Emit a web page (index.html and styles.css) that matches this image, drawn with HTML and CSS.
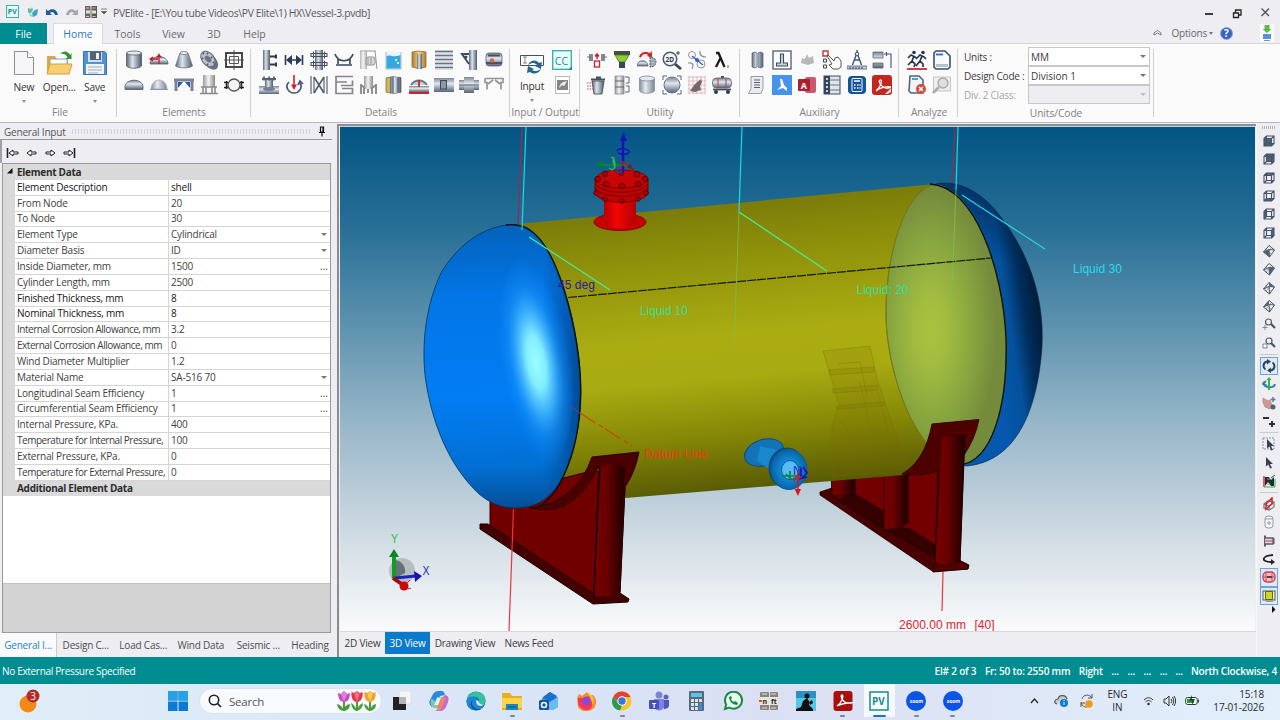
FILE: index.html
```html
<!DOCTYPE html>
<html lang="en">
<head>
<meta charset="utf-8">
<title>PVElite</title>
<link rel="stylesheet" href="styles.css">
</head>
<body>
<svg class="defs" width="0" height="0">
  <defs>
    <linearGradient id="st"><stop offset="0" stop-color="#5c6878"/><stop offset=".4" stop-color="#dde5ec"/><stop offset="1" stop-color="#4d5a6b"/></linearGradient>
    <linearGradient id="sv" x2="0" y2="1"><stop offset="0" stop-color="#7b8796"/><stop offset=".4" stop-color="#e1e7ec"/><stop offset="1" stop-color="#566375"/></linearGradient>
    <linearGradient id="lg"><stop offset="0" stop-color="#9a9a9c"/><stop offset=".45" stop-color="#f3f3f4"/><stop offset="1" stop-color="#89898c"/></linearGradient>
    <linearGradient id="gold"><stop offset="0" stop-color="#a9802f"/><stop offset=".5" stop-color="#f3d482"/><stop offset="1" stop-color="#a77d2b"/></linearGradient>
    <symbol id="cube" viewBox="0 0 14 14"><path d="M2 4.500h7.500v7.500h-7.500zM4.500 2h7.500v7.500h-7.500zM2 4.500l2.500-2.500M9.500 4.500l2.500-2.500M9.500 12l2.500-2.500M2 12l2.500-2.500" fill="none" stroke="#45536a" stroke-width="1.100"/></symbol>
    <symbol id="dia" viewBox="0 0 14 14"><path d="M7 1.500l5.500 4.500-5 7-6-5zM1.500 8l5.500-2.500 5.500.5M7 5.500l.5 7.500" fill="#f1f3f5" stroke="#46525f" stroke-width="1"/><path d="M4 4.800l5.500 5.500M9.500 3.500l-5.500 6.500" fill="none" stroke="#7b8793" stroke-width=".8"/></symbol>
  </defs>
</svg>
<div class="app">
  <header class="titlebar">
    <div class="quick">
      <svg width="14" height="14" viewBox="0 0 14 14"><rect x=".5" y=".5" width="12" height="12" fill="#e7fafa" stroke="#35b4b1"/><text x="1.800" y="9.300" class="pvmini">PV</text></svg>
      <svg width="14" height="14" viewBox="0 0 14 14"><path d="M2 3l3 1 1-2 1 3-3 4-2-2z" fill="#58c0a0"/><path d="M6 8l3-3 3-1-1 6-4 2z" fill="#3aa3bd"/><path d="M3 9l3 1 1 2-3-1z" fill="#8cd3c4"/></svg>
      <svg width="14" height="14" viewBox="0 0 14 14"><path d="M1 4v6h6l-2-2c2-2 4-1 5 2h3c-1-6-6-7-10-4z" fill="#1c5d93"/></svg>
      <svg width="14" height="14" viewBox="0 0 14 14"><path d="M13 4v6h-6l2-2c-2-2-4-1-5 2h-3c1-6 6-7 10-4z" fill="#a7a8ad"/></svg>
      <svg width="14" height="14" viewBox="0 0 14 14"><rect x="1" y="1" width="5.500" height="12" fill="#6f6860"/><rect x="7.500" y="1" width="5.500" height="12" fill="#5d5852"/><path d="M2 7h4M8 7h4" stroke="#e6e2da" stroke-width="3"/><path d="M2 3h3M8.500 3h3M2 11.500h3M8.500 11.500h3" stroke="#c9c5bd"/></svg>
      <svg class="drop" width="8" height="8" viewBox="0 0 8 8"><path d="M1 1h6M1.500 3.500h5l-2.500 2.500z" fill="#555" stroke="#555" stroke-width=".7"/></svg>
    </div>
    <span class="title">PVElite - [E:\You tube Videos\PV Elite\1) HX\Vessel-3.pvdb]</span>
    <svg class="winbtns" width="75" height="16" viewBox="0 0 75 16"><path d="M1 9h8" stroke="#111" stroke-width="1.600"/><path d="M29.500 8h5v4.500h-5zM31.500 8v-3h5.500v5h-2.500" fill="none" stroke="#222" stroke-width="1.300"/><path d="M57.500 3.500l7.500 7.500M65 3.500l-7.500 7.500" stroke="#555" stroke-width="1.400"/></svg>
  </header>
  <nav class="tabs">
    <span class="file">File</span><span class="home">Home</span><span class="t1">Tools</span><span class="t2">View</span><span class="t3">3D</span><span class="t4">Help</span>
    <div class="opt">
      <svg width="9" height="8" viewBox="0 0 9 8"><path d="M1 4l3.500-2.500 3.500 2.500v2l-3.500-2-3.500 2z" fill="#fff" stroke="#666" stroke-width=".9"/></svg>
      <span class="optext">Options</span><i class="car"></i>
      <svg width="13" height="13" viewBox="0 0 13 13"><circle cx="6.500" cy="6.500" r="6" fill="#3c62bd" stroke="#8aa5dc"/><text x="4" y="10" class="q">?</text></svg>
      <svg class="dl" width="14" height="18" viewBox="0 0 14 18"><rect width="14" height="18" fill="#fbfbfc"/><path d="M4.500 1h5v4h2l-4.500 4-4.500-4h2z" fill="#59bb45"/><rect x="3" y="10" width="8" height="5" fill="#5b92df"/><path d="M4 16.500h6" stroke="#7892c0"/></svg>
    </div>
  </nav>

  <section class="ribbon">
    <div class="grp g-file">
      <div class="bigs">
        <div class="big"><svg width="28" height="28" viewBox="0 0 28 28"><path d="M4.500 2.500h13l6 6v17h-19z" fill="#f5f5f7" stroke="#8f8f94"/><path d="M17.500 2.500v6h6" fill="#fff" stroke="#8f8f94"/></svg><span>New</span><i class="car"></i></div>
        <div class="big"><svg width="28" height="28" viewBox="0 0 28 28"><path d="M2 7h8l2 3h11v14h-21z" fill="#e3a938"/><path d="M5 10h17v8h-17z" fill="#fff" stroke="#7aa4d4"/><path d="M2 25l3-10h22l-3 10z" fill="#f8d071" stroke="#d79d37"/><path d="M15 5c4-4 8-3 10 1l1.500-2v6h-6l2-2c-2-3-4-4-7.500-3z" fill="#35912d"/></svg><span>Open...</span></div>
        <div class="big"><svg width="28" height="28" viewBox="0 0 28 28"><path d="M2.500 2.500h21l2 2v21h-23z" fill="#5093d2" stroke="#3972ad"/><path d="M7 3h14v10h-14z" fill="#d8dce4"/><path d="M9 3h11v8h-11z" fill="#576374"/><rect x="15" y="4" width="3" height="6" fill="#eef1f5"/><path d="M5 15h18v10h-18z" fill="#f0f4f9"/><path d="M7 18h14M7 21h14M7 24h10" stroke="#a5adb9"/></svg><span>Save</span><i class="car"></i></div>
      </div>
      <label>File</label>
    </div>
    <div class="grp g-elem">
      <div class="icons c5">
        <svg viewBox="0 0 20 20"><path d="M2.500 3v13c2 3 13 3 15 0v-13z" fill="url(#st)" stroke="#4f5b6a" stroke-width=".8"/><ellipse cx="10" cy="3" rx="7.500" ry="2" fill="#e4e9ee" stroke="#4f5b6a" stroke-width=".8"/></svg>
        <svg viewBox="0 0 20 20"><path d="M1 14c0-10 18-10 18 0z" fill="url(#sv)" stroke="#5e6a79" stroke-width=".8"/><path d="M10 14v-9M8 7.500l2-3 2 3M9 9h-7M4 7l-3 2 3 2" fill="none" stroke="#c31823" stroke-width="1.300"/></svg>
        <svg viewBox="0 0 20 20"><path d="M6 3h8l4.500 13c-3 2.500-14 2.500-17 0z" fill="url(#st)" stroke="#67717e" stroke-width=".8"/><ellipse cx="10" cy="3" rx="4" ry="1.500" fill="#f3f5f7" stroke="#67717e" stroke-width=".8"/></svg>
        <svg viewBox="0 0 20 20"><ellipse cx="11.500" cy="11.500" rx="9.500" ry="6" transform="rotate(50 11.500 11.500)" fill="#66727f"/><ellipse cx="9" cy="9" rx="8.800" ry="6" transform="rotate(50 9 9)" fill="#b9c2cc" stroke="#5b6674"/><ellipse cx="9" cy="9" rx="4" ry="2.500" transform="rotate(50 9 9)" fill="#69747f"/><path d="M4 3l1 1M8 3l1 1M12 7l1 1M14 12l1 1M3 8l1 1M8 14l1 1" stroke="#4b5763" stroke-width="1.800"/></svg>
        <svg viewBox="0 0 20 20"><rect x="2" y="3" width="16" height="14" fill="none" stroke="#353535" stroke-width="1.800"/><path d="M5.500 6.500h9v7h-9zM10 0v20M0 10h20" fill="none" stroke="#555"/></svg>
        <svg viewBox="0 0 20 20"><path d="M1 12c0-9 18-9 18 0v2.500h-18z" fill="url(#sv)" stroke="#4f5b6a" stroke-width=".8"/></svg>
        <svg viewBox="0 0 20 20"><path d="M2 14c1-12 15-12 16 0z" fill="url(#st)" fill-opacity=".75" stroke="#a2a9b2" stroke-width=".8"/><path d="M1 14.500h18" stroke="#8d97a2"/></svg>
        <svg viewBox="0 0 20 20"><path d="M0 5h20M2 5v11M18 5v11" fill="none" stroke="#7a838f" stroke-width="3"/><path d="M4 7h5l-5 6zM16 7h-5l5 6z" fill="#2957b5"/></svg>
        <svg viewBox="0 0 20 20"><path d="M4 0h12v12h-12z" fill="url(#lg)"/><path d="M1 18.500h18M4 12v6M7 12v6M13 12v6M16 12v6M2 12h16" fill="none" stroke="#8a8a8e" stroke-width="1.600"/></svg>
        <svg viewBox="0 0 20 20"><circle cx="10" cy="10" r="6" fill="#f5f5f6" stroke="#555" stroke-width="1.300"/><path d="M2.500 6v8M17.500 6v8M0 7.500h4M16 7.500h4M0 12.500h4M16 12.500h4" stroke="#222" stroke-width="1.500"/></svg>
      </div>
      <label>Elements</label>
    </div>
    <div class="grp g-det">
      <div class="icons c10">
        <svg viewBox="0 0 20 20"><rect x="4" width="7" height="20" fill="url(#st)"/><path d="M11 6.500h7M11 14.500h7M17 4.500v4M17 12.500v4" stroke="#2d3948" stroke-width="2"/></svg>
        <svg viewBox="0 0 20 20"><path d="M3 10h14M1.500 5v10M18.500 5v10" fill="none" stroke="#2b3d55" stroke-width="1.600"/><path d="M2 10l6-5v10zM18 10l-6-5v10z" fill="#2b3d55"/></svg>
        <svg viewBox="0 0 20 20"><rect x="6" width="8" height="20" fill="url(#st)"/><path d="M2 3.500h16v3h-16zM2 12.500h16v3h-16zM4.500 1.500v7M15.500 1.500v7M4.500 10.500v7M15.500 10.500v7" fill="none" stroke="#45515f" stroke-width="1.100"/></svg>
        <svg viewBox="0 0 20 20"><path d="M1 4c3 9 15 9 18 0M2 15h16M4 14v-5M16 14v-5" fill="none" stroke="#34435a" stroke-width="1.600"/></svg>
        <svg viewBox="0 0 20 20"><path d="M1 1h16M16 1l2 18" stroke="#999" fill="none"/><rect x="1" y="1" width="7" height="18" fill="url(#lg)" fill-opacity=".7"/><rect x="7" y="7" width="9" height="8" rx="2" fill="#d8d8d9" stroke="#909093"/><path d="M9 8v6M12 8v6" stroke="#999"/></svg>
        <svg viewBox="0 0 20 20"><path d="M2 2v17h15v-17" fill="#e7f5fd" stroke="#9ba8b4" stroke-width=".8"/><path d="M2.500 6c4-2 7 2 14-1v13.500h-14z" fill="#37a8df"/><circle cx="12" cy="10" r="1" fill="#fff"/><circle cx="14" cy="13" r="1" fill="#fff"/></svg>
        <svg viewBox="0 0 20 20"><path d="M3 2q7-2 14 0v15q-7 3-14 0z" fill="url(#gold)" stroke="#957033" stroke-width=".8"/><path d="M8 4h5v15h-5z" fill="url(#st)"/></svg>
        <svg viewBox="0 0 20 20"><rect x="1" width="18" height="20" fill="#dfe3e8"/><path d="M1 1.500h18M1 5.500h18M1 9.500h18M1 13.500h18M1 17.500h18" stroke="#687484" stroke-width="1.700"/></svg>
        <svg viewBox="0 0 20 20"><rect x="10" width="8" height="20" fill="url(#st)"/><path d="M10 4h-7l7 10" fill="none" stroke="#3f4e62" stroke-width="2"/><circle cx="7" cy="7" r="1.500" fill="#34465b"/></svg>
        <svg viewBox="0 0 20 20"><rect x="2" y="3" width="16" height="13" rx="3" fill="url(#sv)" stroke="#5c6775" stroke-width=".8"/><path d="M4 5.500h12M2 13h16" stroke="#475363" stroke-width="1.800"/><circle cx="8" cy="10.500" r="2.200" fill="#e0604c"/></svg>
        <svg viewBox="0 0 20 20"><path d="M0 11h20v8h-20z" fill="url(#sv)"/><path d="M6 4h8v9h-8z" fill="url(#st)"/><path d="M3 4h14M5 1.500v4M10 1.500v4M15 1.500v4" stroke="#56636f" stroke-width="1.800"/><ellipse cx="10" cy="14" rx="6" ry="2" fill="#758190"/></svg>
        <svg viewBox="0 0 20 20"><path d="M10 0v11" stroke="#d1202b" stroke-width="1.600"/><path d="M7 9.500h6l-3 5.500z" fill="#d1202b"/><path d="M5 7c-5 5 0 11 5 11s9-5 6-10M14 10l2-4 3 3" fill="none" stroke="#48597a" stroke-width="1.700"/></svg>
        <svg viewBox="0 0 20 20"><path d="M2 1v18M18 1v18M5 2v16M15 2v16" stroke="#657180" stroke-width="1.300"/><path d="M5 2l10 16M15 2l-10 16" stroke="#4c5968" stroke-width="1.600"/></svg>
        <svg viewBox="0 0 20 20"><path d="M19 1.500h-17v17h16.500v-5h-10.500M2 7h11M7 10.500h11.500v-5" fill="none" stroke="#85878b" stroke-width="1.700"/></svg>
        <svg viewBox="0 0 20 20"><path d="M5 1h9v13h-9z" fill="url(#lg)"/><path d="M2 9v10M5 12v7M9 14v4M13 12v7M17 9v10M2 10l4 3M17 10l-4 3" fill="none" stroke="#888a8e" stroke-width="1.900"/></svg>
        <svg viewBox="0 0 20 20"><path d="M2 3q7-3 15 0v14q-8 3-15 0z" fill="#d2b74e" stroke="#77744f" stroke-width=".8"/><path d="M6 2h11v16h-11z" fill="url(#st)"/><path d="M9 2v16M14 2v16" stroke="#45556e"/></svg>
        <svg viewBox="0 0 20 20"><rect x="0" y="11" width="20" height="6" fill="url(#sv)"/><path d="M2 10c4-6 12-6 16 0" fill="#c6ccd3" stroke="#6b7683" stroke-width="1.800"/><path d="M0 18h20M10 5v7" stroke="#c7262d" stroke-width="1.800"/></svg>
        <svg viewBox="0 0 20 20"><rect y="3" width="20" height="14" fill="url(#sv)"/><rect x="6.500" y="5.500" width="6" height="8.500" fill="#8d98a6" stroke="#3c4a5b"/></svg>
        <svg viewBox="0 0 20 20"><rect y="5" width="20" height="10" fill="url(#sv)"/><rect x="5" y="2" width="10" height="16" fill="url(#sv)"/><path d="M0 10h20" stroke="#56647a"/></svg>
        <svg viewBox="0 0 20 20"><path d="M1 3.500h18v4h-2v7M3 14.500v-7h-2v-4M4 9l5-4M16 9l-5-4" fill="none" stroke="#929499" stroke-width="1.700"/></svg>
      </div>
      <label>Details</label>
    </div>
    <div class="grp g-io">
      <div class="iorow">
        <div class="big"><svg width="26" height="26" viewBox="0 0 26 26"><path d="M1.500 5.500h23v10h-23z" fill="#fff" stroke="#46515e"/><path d="M4 7h4M6 7v6M4 13h4" stroke="#666" stroke-width=".8"/><path d="M9 15c3-6 9-5 11-2l3-1-1 7-6-3 2-1c-3-3-6-2-9 0zM22 19c-3 6-9 5-11 3l-3 1 1-7 6 3-2 1c3 2 6 1 9-1z" fill="#25668f"/></svg><span>Input</span><i class="car"></i></div>
        <div class="icons c1">
          <svg viewBox="0 0 20 20"><rect x=".7" y=".7" width="18.600" height="18.600" fill="#e9fbfa" stroke="#35aaa6" stroke-width="1.300"/><text x="2.800" y="14.500" class="cc">CC</text><path d="M16 20h4v-4z" fill="#199490"/></svg>
          <svg viewBox="0 0 20 20"><rect x="3.500" y="1.500" width="14" height="17" fill="#fff" stroke="#b8b8bc"/><rect x="5" y="5" width="11" height="10" fill="#858588"/><path d="M7 13c1-5 4-6 8-7l-3 5-2-1z" fill="#eee"/></svg>
        </div>
      </div>
      <label>Input / Output</label>
    </div>
    <div class="grp g-util">
      <div class="icons c6">
        <svg viewBox="0 0 20 20"><path d="M5 4v7M15 4v7M3 4v7M17 4v7" fill="none" stroke="#6a7583" stroke-width="1.700"/><path d="M0 7h4M16 7h4" stroke="#6a7583"/><path d="M10 9v-4M8 6.500l2-2.500 2 2.500" stroke="#c71f2a" stroke-width="1.500" fill="none"/><rect x="7.500" y="11" width="5" height="6" fill="#fff" stroke="#d22a34" stroke-width="1.400"/></svg>
        <svg viewBox="0 0 20 20"><path d="M2 1h16v4h-16z" fill="#43503f"/><path d="M3 5h14l-4 7h-6z" fill="#8bd02d" stroke="#4d6e31" stroke-width=".8"/><path d="M7 12h6v6h-6z" fill="#3c4654"/></svg>
        <svg viewBox="0 0 20 20"><path d="M3 7c2-5 7-5 10-2" fill="none" stroke="#d32530" stroke-width="2.200"/><path d="M15 1v7l-5-2z" fill="#d32530"/><path d="M0 16c0-7 11-7 11 0z" fill="url(#sv)" stroke="#5d6978" stroke-width=".8"/><path d="M13 7v10c8 0 8-10 0-10z" fill="#a4aeb9" stroke="#4e5a69" stroke-dasharray="2 1"/></svg>
        <svg viewBox="0 0 20 20"><circle cx="8" cy="9" r="6.800" fill="#f0f4f8" stroke="#4e5b6b" stroke-width="1.500"/><path d="M13 14l6 5" stroke="#384656" stroke-width="2.800"/><text x="3.600" y="11.500" class="t2d">2D</text><path d="M16 1v4M14 3h4" stroke="#384656"/></svg>
        <svg viewBox="0 0 20 20"><circle cx="5" cy="5" r="3.500" fill="none" stroke="#8998a8"/><circle cx="14" cy="14" r="4" fill="none" stroke="#8998a8"/><path d="M13 1c-1 4 2 6 6 6M1 13c5-1 6 2 4 6" fill="none" stroke="#7d8c9c" stroke-width="1.200"/><path d="M5 6l11 9" stroke="#3557c9" stroke-width="1.300"/><circle cx="10" cy="10" r="2" fill="#3557c9"/></svg>
        <svg viewBox="0 0 20 20"><path d="M4 3h2.500l6 14M8.500 8l-4.500 9" fill="none" stroke="#1c1c1c" stroke-width="2.300"/><path d="M16 15v3" stroke="#666"/></svg>
        <svg viewBox="0 0 20 20"><path d="M5 6h12l-2 13h-8z" fill="url(#st)" stroke="#45515f" stroke-width=".9"/><path d="M4 4.500h14M9 2.500h5" stroke="#465160" stroke-width="2"/><path d="M0 8h7M0 11h7M0 14h7" stroke="#d04a52" stroke-dasharray="1.500 1"/></svg>
        <svg viewBox="0 0 20 20"><path d="M3 1h9v18h-9z" fill="url(#lg)" stroke="#8a8f96" stroke-width=".8"/><path d="M3 6h9M3 12h9M13 2h4v6h-3M14 11h3v6h-4" fill="none" stroke="#596675"/></svg>
        <svg viewBox="0 0 20 20"><path d="M2.500 3v13c2 3 13 3 15 0v-13z" fill="url(#st)" fill-opacity=".75" stroke="#8390ac" stroke-width=".8"/><ellipse cx="10" cy="3.500" rx="7.500" ry="2.500" fill="#e2e8f5" stroke="#7a85a0" stroke-width=".8"/></svg>
        <svg viewBox="0 0 20 20"><circle cx="10" cy="10" r="8" fill="url(#sv)" stroke="#67727f"/><path d="M1 5v-4h4M15 1h4v4M19 15v4h-4M5 19h-4v-4" fill="none" stroke="#576678"/></svg>
        <svg viewBox="0 0 20 20"><path d="M1 2h18M1 6h18M1 10h18M1 14h18M1 18h18M2 1v18M6 1v18M10 1v18M14 1v18M18 1v18" stroke="#e5abae" stroke-width=".8"/><path d="M3 16l5-7 6-5 1 3-2 4 1 4-6 2z" fill="#75686d"/></svg>
        <svg viewBox="0 0 20 20"><path d="M9 1h3v3h-3z" fill="#424f5f"/><rect x=".5" y="3" width="19" height="10" rx="4" fill="url(#sv)" stroke="#5a6674" stroke-width=".8"/><path d="M6 3v10M14 3v10" stroke="#a8474b"/><path d="M1 14.500h18" stroke="#414e5c" stroke-width="1.800"/><circle cx="4" cy="17" r="2" fill="#2f3a47"/><circle cx="16" cy="17" r="2" fill="#2f3a47"/></svg>
      </div>
      <label>Utility</label>
    </div>
    <div class="grp g-aux">
      <div class="icons c6">
        <svg viewBox="0 0 20 20"><path d="M5 3q3-2 5 0v14q-2 2-5 0zM11 3q2-2 5 0v14q-3 2-5 0z" fill="url(#st)" stroke="#67727f" stroke-width=".8"/></svg>
        <svg viewBox="0 0 20 20"><rect x="1" y="1" width="18" height="18" fill="#fff" stroke="#3d4c62" stroke-width="1.200"/><path d="M8.500 4h3v9h4v3h-11v-3h4z" fill="#cbd2da" stroke="#3a495d" stroke-width="1.100"/></svg>
        <svg viewBox="0 0 20 20"><path d="M4 13l1-5 3 1 2-5 2 4 4-2 1 7-6 2z" fill="#b9b9bb"/></svg>
        <svg viewBox="0 0 20 20"><path d="M1 1h5v5h-5z" fill="#fff" stroke="#c9323a" stroke-width="1.400"/><path d="M1.500 9h3v3h-3zM1.500 15h3v3h-3z" fill="none" stroke="#444"/><path d="M6 5l6 6 1-3 3-1 3 4v6l-3 2h-5l-4-4 3-1-5-8z" fill="#fff" stroke="#444" stroke-width=".9"/></svg>
        <svg viewBox="0 0 20 20"><path d="M0 16h20v3h-20z" fill="#c7cdd5" stroke="#4c6380" stroke-width=".8"/><path d="M10 0v3M9.500 4l-4 11M10.500 4l4 11M7 10h6" fill="none" stroke="#41556e" stroke-width="1.400"/><circle cx="10" cy="4" r="1.800" fill="#e0e5eb" stroke="#41556e"/><path d="M3 17v2M6 17v2M9 17v2M12 17v2M15 17v2" stroke="#30455e"/></svg>
        <svg viewBox="0 0 20 20"><path d="M1 2h10v6h-10zM1 13h10v5h-10z" fill="url(#sv)" stroke="#586573" stroke-width=".8"/><path d="M12 4h7v14M14.500 2v4" fill="none" stroke="#44556a" stroke-width="1.100"/></svg>
        <svg viewBox="0 0 20 20"><path d="M4 1.500h12v12l-2 5h-12.500l2.500-5z" fill="#e9ebee" stroke="#8b939c" stroke-width=".9"/><path d="M7 5h6M7 7.500h6M7 10h6M7 12.500h6" stroke="#56606d" stroke-width="1.200"/></svg>
        <svg viewBox="0 0 20 20"><rect width="20" height="20" fill="#4693ee"/><path d="M8 4l2 0 2 6 3 3v3l-4-3-6 2 4-4z" fill="#fff"/></svg>
        <svg viewBox="0 0 20 20"><rect x="8" y="2" width="11" height="16" rx="2" fill="#cc596b"/><rect x="1" y="4" width="12" height="12" rx="1" fill="#ab202e"/><text x="3.800" y="13.500" class="acc">A</text></svg>
        <svg viewBox="0 0 20 20"><rect x="2" y="1" width="16" height="18" fill="#e1e5ea" stroke="#3f4e62"/><path d="M2 1h6v18h-6z" fill="#354659"/><path d="M4 4h2M4 8h2M4 12h2M4 16h2" stroke="#fff" stroke-width="1.600"/><path d="M8 5h10M8 10h10M8 15h10" stroke="#68768a"/></svg>
        <svg viewBox="0 0 20 20"><rect x="1" y="1" width="18" height="18" rx="4" fill="#15529a"/><rect x="5" y="3.500" width="10" height="13" rx="1" fill="none" stroke="#fff"/><path d="M7 6h6M7 10h1.500M10 10h1.500M12.500 10h1M7 13h1.500M10 13h1.500M12.500 13h1" stroke="#fff" stroke-width="1.500"/></svg>
        <svg viewBox="0 0 20 20"><rect width="20" height="20" rx="3" fill="#c3251f"/><path d="M4 16c5-4 7-12 4-11s3 10 9 8-8-2-13 3" fill="none" stroke="#fff" stroke-width="1.300"/><path d="M13 19l6-6v4l-3 2z" fill="#ddd"/></svg>
      </div>
      <label>Auxiliary</label>
    </div>
    <div class="grp g-an">
      <div class="icons c2">
        <svg viewBox="0 0 20 20"><circle cx="7" cy="2.500" r="1.800" fill="#24364c"/><circle cx="16" cy="2.500" r="1.800" fill="#24364c"/><path d="M1 8l3-3 4 2 2 2M7 6l-2 5 3 3-1 3M5 11l-4 4M10 8l3-3 4 2 2 2M15 6l-2 5 3 3v3M13 11l-4 5" fill="none" stroke="#24364c" stroke-width="1.700"/><path d="M0 19h20" stroke="#cc2932" stroke-width="1.800"/></svg>
        <svg viewBox="0 0 20 20"><path d="M4 1h9l5 5v11l-2 2h-12l-2-2v-14z" fill="#f7f9fc" stroke="#3a4d65" stroke-width="1.600"/><path d="M4 4.500h7" stroke="#3567c7" stroke-width="1.800"/><path d="M4 14h12v3h-12z" fill="#b4c0ce"/></svg>
        <svg viewBox="0 0 20 20"><path d="M3 1h9l4 4v13h-12l-2-2z" fill="#f1f5f9" stroke="#52657a" stroke-width="1.600"/><path d="M5 4h6" stroke="#48a8c8" stroke-width="2"/><circle cx="14" cy="14" r="5" fill="#d44a35"/><path d="M12 12l4 4M16 12l-4 4" stroke="#fff" stroke-width="1.500"/></svg>
        <svg viewBox="0 0 20 20"><path d="M1.500 2h17v14h-17z" fill="#eee" stroke="#c6c6c8"/><circle cx="11" cy="8" r="5" fill="#dedee0" stroke="#a9a9ac" stroke-width="1.300"/><path d="M7 12l-6 6" stroke="#ababad" stroke-width="2.500"/></svg>
      </div>
      <label>Analyze</label>
    </div>
    <div class="grp g-units">
      <div class="ugrid">
        <span>Units :</span><div class="combo">MM<i class="car"></i></div>
        <span>Design Code :</span><div class="combo">Division 1<i class="car"></i></div>
        <span class="dis">Div. 2 Class:</span><div class="combo off"><i class="car"></i></div>
      </div>
      <label>Units/Code</label>
    </div>
  </section>

  <main class="work">
    <aside class="panel">
      <div class="phead"><span>General Input</span><i class="grip"></i><svg width="8" height="11" viewBox="0 0 8 11"><path d="M2.500 1h3v5h-3zM1 6.500h6M4 7v3.500M5 1v5" fill="none" stroke="#111" stroke-width="1.200"/></svg></div>
      <div class="pnav">
        <svg width="72" height="12" viewBox="0 0 72 12"><g fill="#fff" stroke="#222" stroke-width="1"><path d="M1.500 1v10" stroke-width="1.600"/><path d="M3 6l4-3v2h5v2h-5v2zM21 6l4-3v2h5v2h-5v2zM49 6l-4-3v2h-5v2h5v2zM67 6l-4-3v2h-5v2h5v2z"/><path d="M68.500 1v10" stroke-width="1.600"/></g></svg>
      </div>
      <div class="pgrid">
        <div class="cat"><svg width="6" height="6" viewBox="0 0 6 6"><path d="M5.500 0v5.500h-5.500z" fill="#111"/></svg><b>Element Data</b></div>
        <div class="row dk"><span>Element Description</span><span>shell</span></div>
        <div class="row"><span>From Node</span><span>20</span></div>
        <div class="row"><span>To Node</span><span>30</span></div>
        <div class="row"><span>Element Type</span><span>Cylindrical<i class="car"></i></span></div>
        <div class="row"><span>Diameter Basis</span><span>ID<i class="car"></i></span></div>
        <div class="row"><span>Inside Diameter, mm</span><span>1500<em>...</em></span></div>
        <div class="row"><span>Cylinder Length, mm</span><span>2500</span></div>
        <div class="row dk"><span>Finished Thickness, mm</span><span>8</span></div>
        <div class="row dk"><span>Nominal Thickness, mm</span><span>8</span></div>
        <div class="row tight"><span>Internal Corrosion Allowance, mm</span><span>3.2</span></div>
        <div class="row tight"><span>External Corrosion Allowance, mm</span><span>0</span></div>
        <div class="row"><span>Wind Diameter Multiplier</span><span>1.2</span></div>
        <div class="row"><span>Material Name</span><span>SA-516 70<i class="car"></i></span></div>
        <div class="row"><span>Longitudinal Seam Efficiency</span><span>1<em>...</em></span></div>
        <div class="row"><span>Circumferential Seam Efficiency</span><span>1<em>...</em></span></div>
        <div class="row"><span>Internal Pressure, KPa.</span><span>400</span></div>
        <div class="row tight"><span>Temperature for Internal Pressure,</span><span>100</span></div>
        <div class="row"><span>External Pressure, KPa.</span><span>0</span></div>
        <div class="row tight"><span>Temperature for External Pressure,</span><span>0</span></div>
        <div class="cat"><b>Additional Element Data</b></div>
        <div class="blank"></div>
        <div class="help"></div>
      </div>
      <div class="ptabs"><span class="on">General I...</span><span>Design C...</span><span>Load Cas...</span><span>Wind Data</span><span>Seismic ...</span><span>Heading</span></div>
    </aside>

    <section class="view">
      <svg class="scene" viewBox="340 127 915 504" preserveAspectRatio="none">
        <defs>
          <linearGradient id="bg" x2="0" y2="1"><stop offset="0" stop-color="#025584"/><stop offset=".2" stop-color="#286f96"/><stop offset=".4" stop-color="#5f93af"/><stop offset=".6" stop-color="#9ab8ca"/><stop offset=".8" stop-color="#cdd9e1"/><stop offset="1" stop-color="#fafbfc"/></linearGradient>
          <linearGradient id="yel" gradientUnits="userSpaceOnUse" x1="700" y1="207" x2="727" y2="492"><stop offset="0" stop-color="#7b7c0a"/><stop offset=".15" stop-color="#8c8e0a"/><stop offset=".45" stop-color="#aaac12"/><stop offset=".6" stop-color="#a8ab11"/><stop offset=".8" stop-color="#858707"/><stop offset="1" stop-color="#585a05"/></linearGradient>
          <linearGradient id="head" gradientUnits="userSpaceOnUse" x1="500" y1="224" x2="508" y2="508"><stop offset="0" stop-color="#0361ba"/><stop offset=".25" stop-color="#0276e6"/><stop offset=".6" stop-color="#027df4"/><stop offset=".85" stop-color="#0270d4"/><stop offset="1" stop-color="#034f97"/></linearGradient>
          <radialGradient id="shine" gradientUnits="userSpaceOnUse" cx="0" cy="0" r="1" gradientTransform="translate(536 362) rotate(-5) scale(36 108)"><stop offset="0" stop-color="#99ffff"/><stop offset=".25" stop-color="#86f0ff" stop-opacity=".97"/><stop offset=".45" stop-color="#52c4ff" stop-opacity=".8"/><stop offset=".7" stop-color="#1f9bff" stop-opacity=".4"/><stop offset="1" stop-color="#0a83ff" stop-opacity="0"/></radialGradient>
          <linearGradient id="rim"><stop offset=".76" stop-color="#033f80" stop-opacity="0"/><stop offset="1" stop-color="#033c7a" stop-opacity=".8"/></linearGradient>
          <radialGradient id="disc" gradientUnits="userSpaceOnUse" cx="0" cy="0" r="1" gradientTransform="translate(931 330) scale(65 140)"><stop offset="0" stop-color="#a8c23e"/><stop offset=".25" stop-color="#a2bc40"/><stop offset=".65" stop-color="#87a53f"/><stop offset="1" stop-color="#758b3c"/></radialGradient>
          <linearGradient id="rhead" gradientUnits="userSpaceOnUse" x1="990" y1="330" x2="1042" y2="322"><stop offset="0" stop-color="#0558ae"/><stop offset=".4" stop-color="#04519c"/><stop offset=".7" stop-color="#012d5b"/><stop offset="1" stop-color="#011b38"/></linearGradient>
          <linearGradient id="rtop" gradientUnits="userSpaceOnUse" x1="1000" y1="184" x2="975" y2="250"><stop offset="0" stop-color="#01244a" stop-opacity=".9"/><stop offset="1" stop-color="#01244a" stop-opacity="0"/></linearGradient>
          <linearGradient id="col"><stop offset="0" stop-color="#760000"/><stop offset=".4" stop-color="#690000"/><stop offset="1" stop-color="#1d0000"/></linearGradient>
          <linearGradient id="noz"><stop offset="0" stop-color="#b80000"/><stop offset=".4" stop-color="#f30505"/><stop offset="1" stop-color="#b30000"/></linearGradient>
          <radialGradient id="bnoz"><stop offset="0" stop-color="#40b7fa"/><stop offset=".45" stop-color="#1388d4"/><stop offset="1" stop-color="#0764a6"/></radialGradient>
        </defs>
        <rect x="340" y="127" width="915" height="504" fill="url(#bg)"/>
        <path d="M522 127L518 225M955 127L952 187" stroke="#912e4c" stroke-width="1.300"/>
        <g class="saddle-rear" stroke="#160000" stroke-width=".8">
          <path d="M820 492l12 -4L940 553l21 8 8 4-1 4-35 2.500L820 495z" fill="#490000"/>
          <path d="M832 470h106v86L832 495z" fill="#720000"/>
          <path d="M831 474h24v22l-23 0z" fill="url(#col)"/>
          <path d="M855 494l28 17v18l-45-29zM884 529l24-1 27 17v12z" fill="#350000"/>
          <path d="M884 473h24v50l-8 5-16 2z" fill="url(#col)"/>
        </g>
        <path d="M935 184C960 179 985 194 1003 220C1034 262 1044 306 1042 346C1038 407 1018 461 967 466L950 463Z" fill="url(#rhead)" stroke="#012247" stroke-width=".6"/>
        <path d="M935 184C960 179 985 194 1003 220C1034 262 1044 306 1042 346C1038 407 1018 461 967 466L950 463Z" fill="url(#rtop)"/>
        <path d="M513 224.500L935 184C975 195 1003 270 1006 338C1008 407 992 459 962 465L904 475L625 498L515 508Z" fill="url(#yel)"/>
        <path d="M935 184C975 190 1003 270 1006 338C1008 407 992 461 960 465C918 459 888 379 886 318C885 254 905 190 935 184Z" fill="url(#disc)" stroke="#606b1d" stroke-width=".7"/>
        <path d="M960 465C918 459 888 379 886 318C885 254 905 190 935 184" fill="none" stroke="#777e16" stroke-width="1"/>
        <path d="M930 184C975 186 1003 270 1006 338C1008 407 992 461 960 465" fill="none" stroke="#070d02" stroke-width="1.300"/>
        <g fill="#806500" fill-opacity=".15" stroke="#707100" stroke-opacity=".4" stroke-width=".8">
          <path d="M823 351L870 346L877 378L890 417L905 458L925 472L832 476V425L839 405Z"/>
          <path d="M829 370l45-3v5l-44 3zM832 389l46-4v5l-45 3zM836 406l48-4v4l-47 3z"/>
          <path d="M838 364l22-2 7 35M840 420l14 20 20 28M860 382l10 45 35 40M878 393l12 45 20 28" fill="none"/>
        </g>
        <path d="M568 297.500L991 258" stroke="#151500" stroke-width="1.200" stroke-dasharray="9 1"/>
        <g stroke="#220000" stroke-width=".9">
          <path d="M932 424L979 419.500Q975 439 964 455L960 561L968 565V569L933 572L935 563L938 471L920 475L902 474Q925 461 932 424Z" fill="#550000"/>
          <path d="M941 435h24L960 561q-14 9-25 2z" fill="url(#col)"/>
        </g>
        <path d="M943 434Q952 430 967 434L977 421L932 425Q926 460 905 474L938 469Z" fill="#4d0000"/>
        <path d="M490 497V528L594 596L620 592L625 487L595 470Z" fill="#700000" stroke="#260000"/>
        <path d="M480 524L488 524L595 595L620 593L629 599L628 602L593 604L480 529Z" fill="#420000" stroke="#1c0000"/>
        <path d="M513 224.500C480 226 456 248 441 273C425 307 422 345 425 375C431 422 449 466 479 494C491 504 503 508 515 508C540 508 556 495 567 467C578 437 581 415 581 392C580 350 573 312 560 277C548 247 535 228 520 225Z" fill="url(#head)" stroke="#03325f" stroke-width=".8"/>
        <path d="M513 224.500C480 226 456 248 441 273C425 307 422 345 425 375C431 422 449 466 479 494C491 504 503 508 515 508C540 508 556 495 567 467C578 437 581 415 581 392C580 350 573 312 560 277C548 247 535 228 520 225Z" fill="url(#rim)"/>
        <ellipse cx="536" cy="362" rx="36" ry="108" transform="rotate(-5 536 362)" fill="url(#shine)"/>
        <path d="M506 225C538 221 554 257 564 290C575 325 583 370 580 404C579 435 572 462 558 487Q547 504 536 508" fill="none" stroke="#05100a" stroke-width="1.300"/>
        <path d="M592 457L639 452Q635 473 625 487L620 593L595 600L594 594L599 466Q580 503 555 509Q543 511 530 508Q576 503 592 457Z" fill="#4b0000" stroke="#200000" stroke-width=".9"/>
        <path d="M601 466q13-5 24 1L619 594q-14 5-25 1z" fill="url(#col)"/>
        <path d="M599 472L594 595" stroke="#160000" stroke-width="1.300"/>
        <path d="M513.500 509L509 631M943 572L942 611" stroke="#ef3340" stroke-width="1.200"/>
        <g fill="none" stroke="#24d8dd" stroke-width="1.200">
          <path d="M526 127L522 230M742 127L739 212M958 127L956 190M962 195L1045 249"/>
          <path d="M529 237L610 290M739 212L827 271" stroke="#43ef9a"/>
          <path d="M739 212L734 345M956 190L951 310" stroke="#7cc047" stroke-width=".8"/>
        </g>
        <path d="M572 407L580 413" stroke="#8a397d"/>
        <path d="M580 413L632 446" stroke="#ce4209" stroke-width="1.200" stroke-dasharray="18 4 5 3"/>
        <g>
          <ellipse cx="620" cy="222" rx="26" ry="8.500" fill="#c60000" stroke="#8a0000"/>
          <path d="M604 198h32v25q-16 10-32 2z" fill="url(#noz)"/>
          <path d="M595 178v16c8 11 45 11 53 0v-16z" fill="#bd0202" stroke="#750000"/>
          <ellipse cx="621.500" cy="179" rx="26" ry="9" fill="#c80505" stroke="#910000"/>
          <path d="M595 184c8 11 45 11 53 0M595 188c8 11 45 11 53 0" fill="none" stroke="#780000"/>
          <g fill="#ae0000" stroke="#460000" stroke-width=".8"><circle cx="598" cy="179" r="2.800"/><circle cx="605" cy="174" r="2.800"/><circle cx="621" cy="173" r="2.800"/><circle cx="637" cy="174" r="2.800"/><circle cx="645" cy="179" r="2.800"/><circle cx="606" cy="184" r="2.800"/><circle cx="622" cy="186" r="2.800"/><circle cx="638" cy="184" r="2.800"/><circle cx="596" cy="193" r="2.300"/><circle cx="605" cy="199" r="2.300"/><circle cx="622" cy="201" r="2.300"/><circle cx="638" cy="199" r="2.300"/><circle cx="646" cy="193" r="2.300"/></g>
          <path d="M623 141V172" stroke="#1414b9" stroke-width="2.500"/><path d="M617 151c1-4 13-2 12 1-2 3-8 2-11 1" fill="none" stroke="#1414b9" stroke-width="1.500"/><path d="M623.500 132l3.500 9h-7z" fill="#1414b9"/>
          <path d="M601 165h28" stroke="#0c8a33" stroke-width="1.800"/><path d="M611 157c5 2 5 11 1 13l-3-2M614 157c-2 3 0 9 2 11" fill="none" stroke="#27c34a" stroke-width="1.300"/><path d="M595 164.500l8-3.500v7z" fill="#087c30"/>
          <path d="M617 170l9-8M621 161l9 6" stroke="#a02332" stroke-width="1.600"/><path d="M627 167l8 4-5-7z" fill="#8a1420"/>
          <path d="M616 167l3 6 3-3" fill="none" stroke="#1444ca" stroke-width="1.600"/>
        </g>
        <g>
          <ellipse cx="764" cy="452.500" rx="20" ry="13" transform="rotate(-18 764 452.500)" fill="#1372b8" stroke="#084b80"/>
          <path d="M760 446l14 3 13 5-10 20-20-13z" fill="#1887cc"/>
          <ellipse cx="787" cy="468" rx="18" ry="20" fill="#08558e" stroke="#063c66" stroke-width=".8"/>
          <ellipse cx="789" cy="469.500" rx="18" ry="20" fill="url(#bnoz)" stroke="#0d5f9e"/>
          <ellipse cx="790" cy="470" rx="8.500" ry="9.500" fill="#58baf4" stroke="#0b5898"/>
          <path d="M782 476h20M790 471v7M786 474l6 6" stroke="#078333" stroke-width="1.700"/>
          <text x="793" y="475" class="axis blue">N</text>
          <path d="M801 468v10M803 467l4 6-5 5M799 479l8-2" stroke="#1111c5" fill="none" stroke-width="1.500"/>
          <path d="M798 471v21M793 480l9-3" stroke="#de161a" stroke-width="1.500"/><path d="M794.500 489h6.500l-3 7z" fill="#de161a"/>
        </g>
        <g>
          <circle cx="402" cy="571" r="13" fill="#9ba3a8" fill-opacity=".6"/><path d="M394 579V560a11 11 0 0 1 11 13z" fill="#687177"/>
          <path d="M392 578V556h4v22z" fill="#119b29"/><path d="M394 549l5 8h-10z" fill="#058721"/>
          <path d="M395 578l21-2" stroke="#1c21c1" stroke-width="3"/><path d="M414 571l8 5-7 6z" fill="#1115a8"/>
          <path d="M393 578l13 9" stroke="#a70506" stroke-width="3.500"/><circle cx="404" cy="586" r="4.500" fill="#cc0509"/><path d="M407 583l3-3M407 588.500h4" stroke="#e12729"/>
          <text x="391" y="543" textLength="7" lengthAdjust="spacingAndGlyphs" class="axis green">Y</text><text x="422.500" y="575" textLength="7" lengthAdjust="spacingAndGlyphs" class="axis blue">X</text>
        </g>
        <g class="lab">
          <text x="558" y="289" textLength="37" fill="#2a1b98">45 deg</text>
          <text x="640" y="315" textLength="48" fill="#35df9a">Liquid 10</text>
          <text x="856.500" y="294" textLength="52" fill="#35df9a">Liquid: 20</text>
          <text x="1073" y="273" textLength="49" fill="#29dbe6">Liquid 30</text>
          <text x="644.500" y="458" textLength="63" fill="#f4380c">Datum Line</text>
          <text x="899" y="628.500" textLength="67" fill="#dc252d">2600.00 mm</text><text x="974.500" y="628.500" textLength="20" fill="#dc252d">[40]</text>
        </g>
      </svg>
      <div class="vtabs"><span>2D View</span><span class="on">3D View</span><span>Drawing View</span><span>News Feed</span></div>
    </section>

    <aside class="tools">
      <i class="tgrip"></i>
      <span class="tb"><svg viewBox="0 0 14 14"><rect x="2" y="4" width="8" height="8" fill="#4f5f72"/><use href="#cube"/></svg></span>
      <span class="tb"><svg viewBox="0 0 14 14"><rect x="4" y="2" width="8" height="8" fill="#4f5f72"/><use href="#cube"/></svg></span>
      <span class="tb"><svg viewBox="0 0 14 14"><path d="M2 4.500l2.500-2.500h7.500l-2.500 2.500z" fill="#556478"/><use href="#cube"/></svg></span>
      <span class="tb"><svg viewBox="0 0 14 14"><path d="M2 12l2.500-2.500h7.500l-2.500 2.500z" fill="#556478"/><use href="#cube"/></svg></span>
      <span class="tb"><svg viewBox="0 0 14 14"><path d="M2 4.500l2.500-2.500v7.500l-2.500 2.500z" fill="#556478"/><use href="#cube"/></svg></span>
      <span class="tb"><svg viewBox="0 0 14 14"><path d="M9.500 4.500l2.500-2.500v7.500l-2.500 2.500z" fill="#556478"/><use href="#cube"/></svg></span>
      <span class="tb"><svg viewBox="0 0 14 14"><use href="#dia"/><path d="M1.500 8l5.500-2.500.5 7.500z" fill="#536272"/></svg></span>
      <span class="tb"><svg viewBox="0 0 14 14"><use href="#dia"/><path d="M12.500 6l-5.500-.5.5 7.500z" fill="#536272"/></svg></span>
      <span class="tb"><svg viewBox="0 0 14 14"><use href="#dia"/><path d="M7 1.500l5.500 4.500-5.500-.5z" fill="#536272"/></svg></span>
      <span class="tb"><svg viewBox="0 0 14 14"><use href="#dia"/><path d="M7 1.500l-5.500 6.500 5.500-2.500z" fill="#536272"/></svg></span>
      <span class="tb"><svg viewBox="0 0 14 14"><circle cx="6.500" cy="5" r="3" fill="#eef1f4" stroke="#4a5765" stroke-width="1.200"/><path d="M9 7l4 4" stroke="#47535f" stroke-width="2.200"/><path d="M3 8v5M.5 10.500h5" stroke="#7d8a96"/></svg></span>
      <span class="tb"><svg viewBox="0 0 14 14"><circle cx="7" cy="5" r="3" fill="#eef1f4" stroke="#4a5765" stroke-width="1.200"/><path d="M9 7l4 4" stroke="#47535f" stroke-width="2.200"/><path d="M1 8h4v4h-4z" fill="#fff" stroke="#77838f"/></svg></span>
      <i class="sep"></i>
      <span class="tb box"><svg viewBox="0 0 14 14"><path d="M5 2.500c-4 1-4.500 6-1.500 8M9 11.500c4-1 4.500-6 1.500-8" fill="none" stroke="#314052" stroke-width="2"/><path d="M5 0l4 2.500-4 3zM9 8.500l-4 3 4 2.500z" fill="#314052"/></svg></span>
      <span class="tb"><svg viewBox="0 0 14 14"><path d="M2 5c-3 5 10 8 11 2M4 4l-3 3 4 2" fill="none" stroke="#367bb8" stroke-width="2"/><path d="M7 1v12" stroke="#30b643" stroke-width="2"/><path d="M7 0l2.500 3h-5z" fill="#30b643"/></svg></span>
      <span class="tb"><svg viewBox="0 0 14 14"><path d="M1 2l5 3 2-1 2 5-2 4-5-2-2-5z" fill="#d09a90" stroke="#a8827c" stroke-width=".7"/><path d="M11 1v5M8.500 3.500h5" stroke="#657a90" stroke-width="1.500"/><circle cx="11" cy="11" r="2.500" fill="#49637d"/></svg></span>
      <span class="tb"><svg viewBox="0 0 14 14"><path d="M1 4h6M7 10h6M10 7v6" stroke="#28313a" stroke-width="2"/></svg></span>
      <i class="sep"></i>
      <span class="tb"><svg viewBox="0 0 14 14"><rect x="1" y="1" width="11" height="11" fill="none" stroke="#88929d" stroke-dasharray="2 1"/><path d="M5 2l7 7h-3l2 4-2 .5-1.500-4-2.500 2z" fill="#39424f"/></svg></span>
      <span class="tb"><svg viewBox="0 0 14 14"><path d="M4 2l7 7h-3l2 4-2 .5-1.500-4-2.500 2z" fill="#364353"/></svg></span>
      <span class="tb"><svg viewBox="0 0 14 14"><path d="M3 3h4l2 3 3-3v9h-3l-3-4-3 4z" fill="#1e2e2d"/><path d="M5 5h3M5 10h3" stroke="#8ca5a6"/><path d="M2 13v-11" stroke="#d53135" stroke-width="1.500"/><path d="M2 13h11M13 5v8" stroke="#2cb443"/><path d="M9 4l4-3" stroke="#33b"/></svg></span>
      <i class="sep"></i>
      <span class="tb"><svg viewBox="0 0 14 14"><path d="M2 7l4-3 6 1v5l-5 3-5-2zM2 7l5 2 5-4M7 9v4" fill="#fff" stroke="#6a7580" stroke-width="1.200"/><path d="M4 12l0-5 6-6v6z" fill="none" stroke="#d5272d" stroke-width="1.600"/></svg></span>
      <span class="tb"><svg viewBox="0 0 14 14"><rect x="3" y="1" width="8" height="12" rx="3" fill="#f5f6f8" stroke="#949ba4"/><path d="M3 4h8M6 7h2v2h-2z" fill="none" stroke="#949ba4"/></svg></span>
      <span class="tb"><svg viewBox="0 0 14 14"><path d="M3 1.500v11M11.500 4v6" stroke="#555f6d" stroke-width="2"/><path d="M3 4h8v6h-8" fill="#d5d9de" stroke="#555f6d" stroke-width="1.300"/><path d="M2 7h10" stroke="#d54145"/></svg></span>
      <span class="tb"><svg viewBox="0 0 14 14"><path d="M11 3c-12 1-12 7-2 7h1" fill="none" stroke="#20242b" stroke-width="1.800"/><path d="M9 7l4 3-4 3z" fill="#20242b"/></svg></span>
      <span class="tb box"><svg viewBox="0 0 14 14"><rect x="1" y="2" width="12" height="10" rx="4" fill="#f4bec2" stroke="#cd3e47" stroke-width="1.300"/><path d="M1 7h12M4 3v8M10 3v8" stroke="#d3424b"/><path d="M5 7h5" stroke="#464955" stroke-width="2"/></svg></span>
      <span class="tb box"><svg viewBox="0 0 14 14"><rect x="1" y="2" width="12" height="9" fill="#f1f5b0" stroke="#4e5e53"/><path d="M3.500 2.500h7v8h-7z" fill="#cfd629" stroke="#5d6828"/><path d="M4 12.500h7" stroke="#999"/></svg></span>
      <svg class="more" width="5" height="7" viewBox="0 0 5 7"><path d="M1 0l3.500 3.500-3.500 3.500z" fill="#111"/></svg>
    </aside>
  </main>

  <footer class="status"><span>No External Pressure Specified</span><span class="s1">El# 2 of 3</span><span class="s2">Fr: 50 to: 2550 mm</span><span class="s3">Right</span><span class="s4">...</span><span class="s4">...</span><span class="s4">...</span><span class="s4">...</span><span class="s5">...</span><span class="s6">North Clockwise, 4</span></footer>

  <nav class="taskbar">
    <svg class="wx" width="26" height="28" viewBox="0 0 26 28"><circle cx="9" cy="17" r="8.500" fill="#f28a15"/><circle cx="14" cy="9" r="6.500" fill="#b52a27"/><text x="11.300" y="12.800" class="badge">3</text></svg>
    <svg class="win" width="20" height="20" viewBox="0 0 20 20"><path d="M0 0h9.500v9.500h-9.500zM10.500 0h9.500v9.500h-9.500zM0 10.500h9.500v9.500h-9.500zM10.500 10.500h9.500v9.500h-9.500z" fill="#0a7bd0"/><path d="M0 0h9.500v9.500h-9.500zM10.500 0h9.500v9.500h-9.500z" fill="#24a2e4"/></svg>
    <div class="search"><svg width="14" height="14" viewBox="0 0 14 14"><circle cx="6" cy="6" r="4.700" fill="none" stroke="#222" stroke-width="1.600"/><path d="M9.500 9.500l3.500 3.500" stroke="#222" stroke-width="1.700"/></svg><span>Search</span>
      <svg class="tulips" width="42" height="22" viewBox="0 0 42 22"><g fill="#4a9c3c"><path d="M7 11h2v10h-2zM20 11h2v10h-2zM33 11h2v10h-2z"/><path d="M8 21q-6 0-7-7 5 1 7 7 0-6 6-7 0 6-6 7zM21 21q-5-1-6-8 4 2 6 8 1-6 6-8 0 6-6 8zM34 21q-5-1-6-7 4 1 6 7 1-6 6-7 0 6-6 7z"/></g><path d="M2 3l3 1 3-3 3 3 3-1c0 5-2 9-6 9S2 8 2 3z" fill="#c84bc6"/><path d="M8 1l3 3-3 8-3-8z" fill="#e07fdc"/><path d="M15.500 2l2.500 1 3-2 3 2 2.500-1c1 6-2 10-5.500 10s-6.500-4-5.500-10z" fill="#e2394f"/><path d="M21 1l2.500 3-2.500 8-2.500-8z" fill="#f5717c"/><path d="M28.500 2l2.500 1 3-2 3 2 2.500-1c1 6-2 10-5.500 10s-6.500-4-5.500-10z" fill="#f3a02b"/><path d="M34 1l2.500 3-2.500 8-2.500-8z" fill="#fdc95a"/></svg></div>
    <div class="apps">
      <span><svg viewBox="0 0 20 20"><path d="M7 0h12v13h-12z" fill="#f5f5f5" stroke="#ccc" stroke-width=".5"/><path d="M1 6h6v7h7v6h-13z" fill="#222"/><path d="M7 6h7v7h-7z" fill="#b5b5b5"/></svg></span>
      <span><svg viewBox="0 0 20 20"><path d="M4 3q2-3 5-3h4q2 0 3 4l-5 1-4 11H3q-4-3-2-7z" fill="#298ad9"/><path d="M2 8q3 0 5 4l1-6h5l-4 11H5q-4-1-3-9z" fill="#7fc8aa"/><path d="M16 4q5 1 3 7l-2 5q-2 4-6 4H6q3-1 4-5l3-8z" fill="#c46ad6"/><path d="M12 7h5l-4 9q-2 4-5 4 0-5 4-13z" fill="#f3845a"/><path d="M8 7h4l-3 7h-4z" fill="#e2edfb"/></svg></span>
      <span><svg viewBox="0 0 20 20"><circle cx="10" cy="10" r="9.500" fill="#0a6cb8"/><path d="M1 9C2-2 20-2 19.500 10c0 4-6 5-7 2 3-6-6-9-11.500-3z" fill="#35c1a0"/><path d="M.5 10c1-6 10-6 12 0-1 3 1 5 6 4-5 8-18 7-18-4z" fill="#1b87d6"/><path d="M7 9c-3 4 1 10 8 9-7 4-14-4-8-9z" fill="#0a4f9c"/><path d="M12.500 10c0 3 3 4 6 3l-3 2c-4 0-6-3-5-6z" fill="#e6f1fa"/></svg></span>
      <span class="run"><svg viewBox="0 0 20 20"><path d="M0 2h8l2 3h10v14h-20z" fill="#eeac1c"/><path d="M0 7h20v10h-20z" fill="#fdd34a"/><path d="M4 13h12v6h-12z" fill="#1787cc"/><path d="M6 16h8" stroke="#0c4f87"/></svg></span>
      <span><svg viewBox="0 0 20 20"><path d="M3 7l8-6 8 6v9l-5 3H4z" fill="#2c8be1"/><path d="M4 6l7-5 7 4-6 6z" fill="#1d6fc9"/><path d="M9 12l10-6v10l-5 3h-5z" fill="#67bdf5"/><rect y="9" width="10" height="10" rx="1.500" fill="#1353a7"/><circle cx="5" cy="14" r="2.500" fill="none" stroke="#fff" stroke-width="1.500"/></svg></span>
      <span><svg viewBox="0 0 20 20"><path d="M1 7l2-4 3 2 5-4 2 3 4 0c4 4 4 9 1 13-5 5-13 4-16-1z" fill="#fb8a2d"/><path d="M2 7l5 0 5-2c5 3 6 10 2 13-6 3-11-2-12-6z" fill="#f2385c"/><circle cx="10" cy="10" r="4.300" fill="#8a4bd0"/><path d="M11 1c6 3 8 8 6 13l-3-8z" fill="#ffc33b"/></svg></span>
      <span class="run"><svg viewBox="0 0 20 20"><circle cx="10" cy="10" r="9.500" fill="#fbc42c"/><path d="M1.500 5.500A9.500 9.500 0 0 1 18.500 6H10L6.200 12z" fill="#e34136"/><path d="M1.500 5.500L6 12.500 10 14l-2 5.500C1 19-2 11 1.500 5.500z" fill="#259c4a"/><circle cx="10" cy="10" r="4.700" fill="#fff"/><circle cx="10" cy="10" r="3.700" fill="#3279dc"/></svg></span>
      <span><svg viewBox="0 0 20 20"><circle cx="10" cy="4" r="3.500" fill="#7c83dc"/><circle cx="17" cy="6" r="2.500" fill="#5c63bd"/><path d="M5 8h10v9q-5 5-10 0z" fill="#7b83eb"/><path d="M15 9h5v6q-1 3-5 3z" fill="#5059b3"/><rect y="9" width="10" height="9" rx="1" fill="#4651b6"/><text x="3" y="16.500" class="tt">T</text></svg></span>
      <span><svg viewBox="0 0 20 20"><rect x="3" width="15" height="20" rx="1" fill="#5a6979"/><path d="M5 2h11v4h-11z" fill="#5ac3ec"/><path d="M5 8h3v3h-3zM9 8h3v3h-3zM13 8h3v3h-3zM5 12h3v3h-3zM9 12h3v3h-3zM5 16h3v3h-3zM9 16h3v3h-3z" fill="#d9e2e9"/><path d="M13 12h3v7h-3z" fill="#3092d2"/></svg></span>
      <span><svg viewBox="0 0 20 20"><path d="M2 18l1.200-4.500a8.500 8.500 0 1 1 3 3z" fill="#e8fbf0" stroke="#158a43" stroke-width="2"/><path d="M6 6c0 5 5 8 8 8l1-2-3-2-1 1c-2-1-3-2-3-3l1-1-1-2z" fill="#158a43"/></svg></span>
      <span><svg viewBox="0 0 20 20"><rect x="1" y="1" width="9" height="18" rx="1" fill="#8a857b"/><rect x="11" y="1" width="8" height="18" rx="1" fill="#8a857b"/><path d="M1 6h9v8h-9zM11 6h8v8h-8z" fill="#e9e5dc"/><text x="3.500" y="12.800" class="ft">n</text><text x="12" y="12.800" class="ft">ft</text><path d="M3 3h5M3 17h5M12 3h5M12 17h5" stroke="#dedcd6"/><path d="M0 10h3" stroke="#dc4d30" stroke-width="2"/></svg></span>
      <span><svg viewBox="0 0 20 20"><rect width="20" height="20" fill="#54c8e8"/><rect width="20" height="7" fill="#2992be"/><circle cx="11" cy="5" r="2.500" fill="#111"/><path d="M0 20v-2l5-2 2-6 4-3 2 3 0 4 4 4v2zM13 11l3-2 1 3-3 2z" fill="#111"/></svg></span>
      <span class="run"><svg viewBox="0 0 20 20"><rect x=".5" width="19" height="20" rx="3" fill="#a80f0d"/><path d="M4 15c5-3 7-11 5-11s0 9 8 8-8 0-13 3" fill="none" stroke="#fff" stroke-width="1.400"/></svg></span>
      <span class="run act"><svg viewBox="0 0 20 20"><rect x="1" y="1" width="18" height="18" fill="#f7ffff" stroke="#188b8b" stroke-width="1.500"/><text x="3" y="14" class="pv">PV</text></svg></span>
      <span class="run"><svg viewBox="0 0 20 20"><circle cx="10" cy="10" r="10" fill="#0b54e7"/><text x="3.700" y="11.800" class="zm">zoom</text></svg></span>
      <span class="run"><svg viewBox="0 0 20 20"><circle cx="10" cy="10" r="10" fill="#0b54e7"/><text x="3.700" y="11.800" class="zm">zoom</text></svg></span>
    </div>
    <div class="tray">
      <svg width="9" height="6" viewBox="0 0 9 6"><path d="M1 5l3.500-4 3.500 4" fill="none" stroke="#222" stroke-width="1.200"/></svg>
      <svg class="t-a" width="15" height="14" viewBox="0 0 15 14"><path d="M3 10c-4-1-2-5 1-5 1-5 8-4 9 0" fill="#ccc" stroke="#555" stroke-width="1.200"/><circle cx="10" cy="9" r="4" fill="#087dd4"/><path d="M10 6v1M10 8v3" stroke="#fff"/></svg>
      <svg class="t-b" width="14" height="16" viewBox="0 0 14 16"><path d="M2 6c1-5 8-5 10-1M12 1v4h-4M1 9c1 5 4 5 6 5M1 14v-4h4" fill="none" stroke="#555"/><circle cx="9" cy="11" r="3.800" fill="#f49a18"/></svg>
      <span class="lang">ENG<br>IN</span>
      <svg width="11" height="10" viewBox="0 0 11 10"><path d="M1 4c3-3 6-3 9 0M2.500 6c2-2 4-2 6 0" fill="none" stroke="#333"/><circle cx="5.500" cy="8" r="1.200" fill="#222"/></svg>
      <svg width="13" height="12" viewBox="0 0 13 12"><path d="M1 4h2l3-3v10l-3-3h-2zM8 4q2 2 0 4M9.500 2q3 4 0 8M11 1q3.500 5 0 10" fill="none" stroke="#333"/></svg>
      <svg width="15" height="12" viewBox="0 0 15 12"><rect x=".7" y="2.500" width="11.500" height="7" rx="2" fill="#fff" stroke="#333"/><path d="M2 4h7v4h-7z" fill="#2d9c42"/><path d="M13.500 4.500v3" stroke="#333"/><path d="M7 0l-3 6h3v4l3-6h-3z" fill="#1b5024"/></svg>
      <span class="clock">15:18<br>17-01-2026</span>
    </div>
  </nav>
</div>
</body>
</html>
```
FILE: styles.css
```css
* { box-sizing: border-box; }
html, body { margin: 0; padding: 0; }
body { width: 1280px; height: 720px; overflow: hidden; font-family: "Open Sans", "Noto Sans", sans-serif; font-size: 10px; color: #333; }
svg { display: block; flex: none; }
i, em { font-style: normal; }
.defs { position: absolute; }
.app { display: flex; flex-direction: column; height: 720px; background: #eeedf2; }

.titlebar { height: 23px; flex: none; display: flex; align-items: center; }
.quick { display: flex; gap: 5.500px; padding-left: 6px; width: 113px; align-items: center; height: 20px; }
.quick .drop { margin-left: -4px; }
.title { font-size: 10.400px; letter-spacing: -.36px; color: #5a5a5e; white-space: nowrap; padding-top: 3px; }
.winbtns { margin-left: auto; margin-right: 1px; margin-top: 2px; }
.pvmini { font: bold 7px "Open Sans", sans-serif; fill: #16908d; }

.tabs { height: 21px; flex: none; display: flex; align-items: center; border-bottom: 1px solid #d4d4d9; font-size: 10.400px; color: #68686d; }
.tabs > span { height: 21px; line-height: 22px; text-align: center; }
.file { width: 47px; background: #008d92; color: #fff; }
.tabs .home { width: 50px; margin-left: 6px; background: #fcfcfd; color: #2a7ac4; border: 1px solid #dadadf; border-bottom: 0; line-height: 20px; }
.t1 { width: 49px; }
.t2 { width: 43px; }
.t3 { width: 38px; }
.t4 { width: 43px; }
.opt { margin-left: auto; display: flex; align-items: center; padding-right: 6px; }
.optext { margin-left: 10px; margin-right: 2px; font-size: 10px; letter-spacing: -.2px; }
.opt .car + svg { margin-left: 7px; }
.opt .dl { margin-left: 27px; }
.q { font: bold 10px "Open Sans", sans-serif; fill: #fff; }
.car { display: inline-block; width: 0; height: 0; border: 3px solid transparent; border-top: 3.500px solid #777; border-bottom: 0; }
.opt .car, .big .car { border-width: 2.500px; border-top-width: 3px; border-bottom: 0; }

.ribbon { height: 79px; flex: none; display: flex; background: #fbfafb; border-bottom: 1px solid #b9b9bd; }
.grp { position: relative; height: 78px; display: flex; flex-direction: column; padding: 6px 0 1px; }
.grp::after { content: ""; position: absolute; right: 0; top: 5px; height: 68px; border-right: 1px solid #cfcfd2; }
.grp > label { margin-top: auto; height: 17px; line-height: 17px; text-align: center; color: #808084; font-size: 10.200px; letter-spacing: -.05px; white-space: nowrap; }
.g-file { width: 117px; }
.g-elem { width: 134px; padding-left: 7px; }
.g-det { width: 259px; padding-left: 8px; }
.g-io { width: 70px; }
.g-util { width: 160px; padding-left: 7px; }
.g-aux { width: 159px; padding-left: 7px; }
.g-an { width: 59px; padding-left: 8px; }
.g-units { width: 196px; padding: 4px 0 2px 6px; }
.icons { display: grid; grid-auto-rows: 20px; gap: 5px; }
.icons svg { width: 20px; height: 20px; }
.c1 { grid-template-columns: 20px; }
.c2 { grid-template-columns: repeat(2, 20px); }
.c5 { grid-template-columns: repeat(5, 20px); }
.c6 { grid-template-columns: repeat(6, 20px); }
.c10 { grid-template-columns: repeat(10, 20px); }
.g-elem label, .g-det label, .g-util label, .g-aux label, .g-an label { margin-left: -7px; }
.g-units label { margin-left: -6px; }
.g-file label { padding-left: 3px; }
.bigs { display: flex; padding-left: 6px; }
.big { width: 35.500px; display: flex; flex-direction: column; align-items: center; color: #333; font-size: 10.200px; letter-spacing: -.2px; white-space: nowrap; }
.big span { line-height: 16px; margin-top: 2px; }
.big .car { margin-top: 5px; opacity: .8; }
.g-file .bigs { margin-top: -1px; }
.iorow { display: flex; gap: 7px; padding-left: 5px; width: 68px; }
.iorow .big { width: 31px; padding-left: 3px; overflow: visible; }
.iorow .icons { margin-left: -1px; }
.cc { font: 10.500px "Open Sans", sans-serif; fill: #21918e; }
.t2d { font: bold 6.500px "Open Sans", sans-serif; fill: #27374c; }
.acc { font: bold 9px "Open Sans", sans-serif; fill: #fff; }
.ugrid { display: grid; grid-template-columns: 64px 122px; grid-auto-rows: 19.200px; align-items: center; color: #3b3b3e; white-space: nowrap; letter-spacing: -.25px; margin-top: -1px; }
.ugrid .dis { color: #a4a4a8; }
.combo { height: 19px; border: 1px solid #c6c6cc; background: #fff; padding: 0 3px 0 2px; display: flex; align-items: center; justify-content: space-between; letter-spacing: 0; }
.combo.off { background: #eeedf1; justify-content: flex-end; }
.off .car { opacity: .4; }

.work { height: 534px; flex: none; display: flex; }
.panel { width: 337px; display: flex; flex-direction: column; border-right: 1px solid #eeeef2; }
.phead { height: 17px; display: flex; align-items: center; padding: 1px 6px 0 4px; color: #555; border-bottom: 1px solid #98989c; margin-right: 4px; font-size: 10px; letter-spacing: -.2px; white-space: nowrap; flex: none; }
.grip { flex: 1; height: 5px; margin: 0 6px 0 5px; background: radial-gradient(circle, #bcbcc1 .7px, transparent .9px) 0 0 / 3px 2.500px; }
.pnav { height: 23px; border-left: 2px solid #a1a1a5; display: flex; align-items: center; padding: 3px 0 0 4px; flex: none; }
.pgrid { width: 329px; margin-left: 2px; height: 470px; border: 1px solid #999; display: flex; flex-direction: column; font-size: 10px; letter-spacing: -.2px; background: #fff; flex: none; }
.cat { height: 15.800px; background: #d9d9da; line-height: 14px; display: flex; align-items: center; position: relative; padding-left: 14px; color: #2c2c2e; flex: none; letter-spacing: -.28px; }
.cat svg { position: absolute; left: 4px; top: 4px; }
.row { height: 15.840px; flex: none; display: grid; grid-template-columns: 153px 1fr; border-left: 12px solid #d9d9da; color: #3e3e41; line-height: 15px; }
.row.dk { color: #141416; }
.row span { border-bottom: 1px solid #d5d5d8; padding-left: 2px; white-space: nowrap; position: relative; }
.row.tight > span:first-child { letter-spacing: -.48px; }
.row span + span { border-left: 1px solid #d5d5d8; }
.row .car, .row em { position: absolute; right: 3px; top: 6px; }
.row em { top: 0; right: 2px; letter-spacing: 0; }
.blank { flex: 1; }
.help { height: 49px; background: #d2d2d3; border-top: 1px solid #c2c2c4; flex: none; }
.ptabs { display: flex; height: 24px; font-size: 10px; letter-spacing: -.2px; color: #4d4d50; white-space: nowrap; }
.ptabs span { width: 57.500px; text-align: center; line-height: 24px; }
.ptabs span:last-child { width: 46px; }
.ptabs .on { width: 57px; background: #fafafc; color: #2384cc; border-right: 1px solid #ccc; }

.view { width: 919px; border-left: 2px solid #8b8b90; border-top: 2px solid #8f8f95; display: flex; flex-direction: column; padding-left: 1px; margin-top: 1px; }
.scene { width: 915px; height: 505px; border-top: 1px solid #c6d3df; }
.vtabs { display: flex; height: 24px; color: #3b3b3e; font-size: 10px; letter-spacing: -.22px; border-top: 1px solid #d7d7db; white-space: nowrap; }
.vtabs span { height: 22px; line-height: 23px; width: 45px; text-align: center; }
.vtabs .on { background: #0a7acc; color: #fff; }
.vtabs span:nth-child(3) { width: 70px; }
.vtabs span:nth-child(4) { width: 58px; }
.lab { font: 12px "Liberation Sans", Arial, sans-serif; }
.axis { font: 12px "Liberation Sans", Arial, sans-serif; }
.axis.blue { fill: #2227c6; }
.axis.green { fill: #27bd4b; }

.tools { width: 24px; padding: 3px 1px 0 2px; display: flex; flex-direction: column; align-items: center; border-left: 1px solid #f8f8fa; }
.tgrip { width: 14px; height: 3px; margin-bottom: 3px; background: repeating-linear-gradient(90deg, #b5b5ba 0 1px, transparent 1px 2px); flex: none; }
.tb { width: 18px; height: 18.320px; flex: none; display: grid; place-items: center; }
.tb svg { width: 14px; height: 14px; }
.tb.box { border: 1px solid #6ba4dc; background: #dceafa; }
.sep { width: 18px; height: 1px; margin: 2px 0; background: #c9c9ce; flex: none; }
.tools .more { margin-left: 8px; margin-top: 1px; }

.status { height: 27px; flex: none; background: #008d92; color: #fff; display: flex; align-items: center; padding: 0 3px 0 2px; font-size: 10px; letter-spacing: -.32px; white-space: nowrap; }
.status .s1 { margin-left: auto; }
.status .s1, .status .s2, .status .s3, .status .s4, .status .s5, .status .s6 { font-weight: 600; letter-spacing: -.2px; }
.s2, .s3, .s4 { margin-left: 8.500px; }
.s5, .s6 { margin-left: 8px; }

.taskbar { height: 36px; flex: none; position: relative; background: linear-gradient(90deg, #dfeef9, #d9e4f6 45%, #dbdff3 60%, #dfe9f8 85%, #e1f0fb); display: flex; align-items: center; }
.wx { margin: -2px 0 0 19px; }
.badge { font: 10px "Open Sans", sans-serif; fill: #fff; }
.win { margin-left: 123px; margin-top: -3px; }
.search { margin: -2px 0 0 11px; width: 183px; height: 26px; border-radius: 13px; background: #f8fbfe; border: 1px solid #d8e0eb; display: flex; align-items: center; padding-left: 8px; font-size: 11.500px; letter-spacing: -.2px; color: #555; }
.search span { margin-left: 7px; }
.tulips { margin-left: auto; margin-right: 3px; }
.apps { display: flex; margin-left: 2px; height: 36px; }
.apps span { width: 36.700px; display: grid; place-items: center; position: relative; padding-bottom: 3px; }
.apps svg { width: 20px; height: 20px; }
.apps .run::after { content: ""; position: absolute; left: 16px; bottom: 3px; width: 5px; height: 2px; border-radius: 1px; background: #82838c; }
.apps .act { background: linear-gradient(#f5f8fd, #f5f8fd) 3px 0 / 31px 33px no-repeat; }
.apps .run.act::after { left: 12px; width: 13px; background: #1976bd; }
.tt { font: bold 7px "Open Sans", sans-serif; fill: #fff; }
.ft { font: bold 7px "Open Sans", sans-serif; fill: #222; }
.pv { font: bold 10px "Open Sans", sans-serif; fill: #18898a; }
.zm { font: bold 5px "Open Sans", sans-serif; fill: #fff; }
.tray { margin-left: auto; margin-top: -3px; display: flex; align-items: center; padding-right: 16px; font-size: 10px; letter-spacing: -.15px; line-height: 13px; color: #29292d; gap: 7px; white-space: nowrap; }
.tray > svg + svg { margin-left: 2px; }
.tray .t-a { margin-left: 8px; }
.tray .t-b { margin-left: 4px; }
.lang { text-align: center; margin: 0 9px 0 6px; }
.clock { text-align: right; margin-left: 6px; }
```
